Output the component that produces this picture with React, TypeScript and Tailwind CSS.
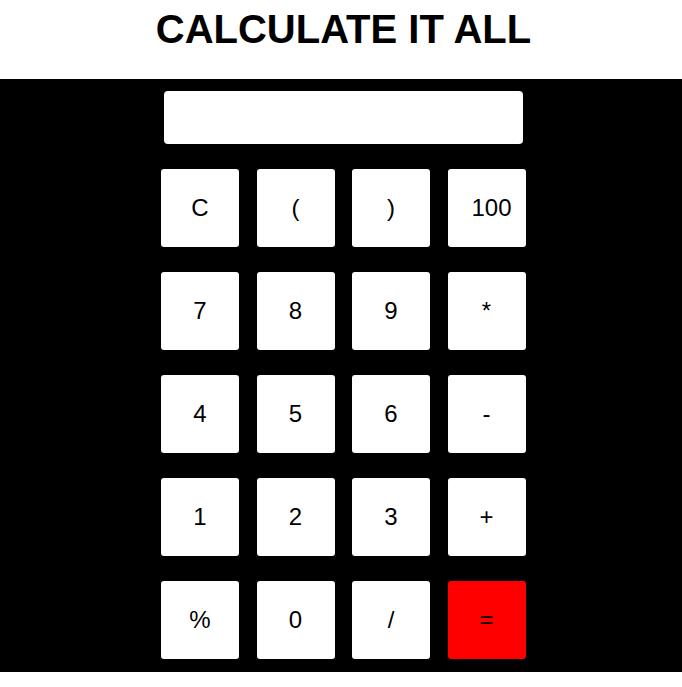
import React from "react";

const keys = [
  "C", "(", ")", "100",
  "7", "8", "9", "*",
  "4", "5", "6", "-",
  "1", "2", "3", "+",
  "%", "0", "/", "=",
];

export default function App() {
  return (
    <div className="w-[682px] h-[687px] bg-white" style={{ fontFamily: '"Liberation Sans", Arial, sans-serif' }}>
      <header className="h-[79px] pt-[6px] flex justify-center pl-[5px]">
        <h1 className="text-[40px] leading-[46px] font-bold text-black">CALCULATE IT ALL</h1>
      </header>
      <main className="bg-black pt-[12px] pb-[13px] flex justify-center pl-[5px]">
        <div className="w-[365px] flex flex-col">
          <div className="mx-[3px] h-[53px] bg-white rounded-[4px]" />
          <div className="mt-[25px] grid grid-cols-[78px_78px_78px_78px] gap-x-[17.5px] gap-y-[25px]">
            {keys.map((k) => (
              <button
                key={k}
                className={
                  "h-[78px] rounded-[3px] text-[24px] text-black flex items-center " +
                  (k === "=" ? "bg-[#ff0000] justify-center" : k === "100" ? "bg-white justify-start pl-[24px]" : "bg-white justify-center")
                }
              >
                {k}
              </button>
            ))}
          </div>
        </div>
      </main>
    </div>
  );
}
